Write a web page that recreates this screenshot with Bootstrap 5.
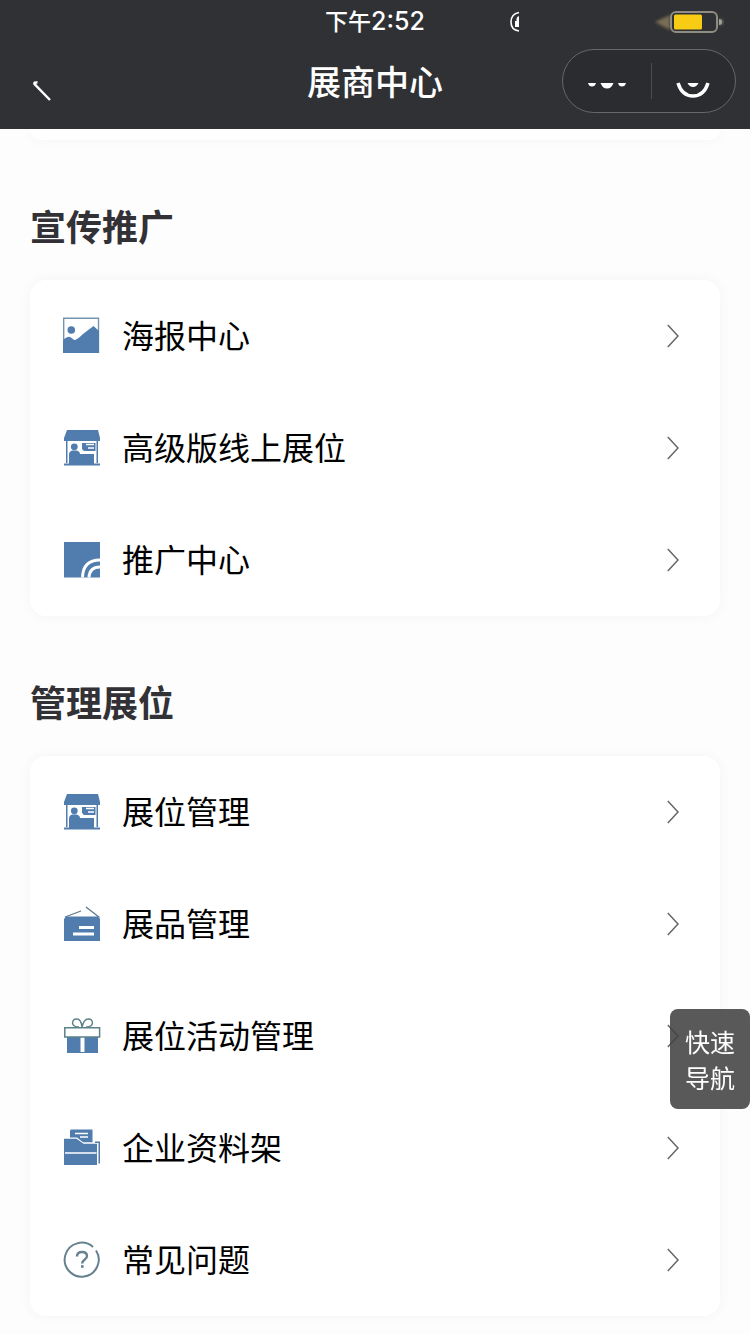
<!DOCTYPE html>
<html lang="zh-CN">
<head>
<meta charset="utf-8">
<meta name="viewport" content="width=device-width, initial-scale=1">
<title>展商中心</title>
<link rel="stylesheet" href="https://cdn.jsdelivr.net/npm/bootstrap@5.3.0/dist/css/bootstrap.min.css">
<style>
  body { background: #fefdfe; color: #000; font-family: "Liberation Sans", "Noto Sans CJK SC", sans-serif; }
  svg { display: block; flex: none; }
  .app-header { background: #303134; color: #fff; z-index: 10; padding-bottom: 10px; }
  .status-bar, .title-bar { display: grid; grid-template-columns: 1fr auto 1fr; align-items: center; }
  .status-bar { height: 43px; }
  .status-time { font: 500 25px/42px Inter, "Noto Sans CJK SC", sans-serif; }
  .status-time span { font-size: 23px; }
  .status-icons { padding-left: 84px; padding-right: 26px; }
  .title-bar { height: 76px; }
  .title-bar h1 { font: 500 34px/76px "Noto Sans CJK SC", sans-serif; }
  .back-btn { margin-left: 32px; justify-self: start; height: 44px; }
  .back-btn svg { margin-top: 20px; }
  .capsule { width: 174px; height: 64px; margin-right: 14px; border: 1px solid #66676a; background: #2b2c2f; }
  .capsule-split { width: 1px; height: 36px; background: #4c4d50; }
  .panel { margin: 0 30px; background: #fff; border-radius: 16px; box-shadow: 0 0 12px rgba(70, 50, 80, .05); }
  .panel-end { height: 11px; border-radius: 0 0 16px 16px; }
  .section-title { font: 700 36px/54px "Noto Sans CJK SC", sans-serif; color: #323136; padding: 58px 30px 28px; }
  .menu-row { height: 112px; padding: 0 41px 0 33px; gap: 21px; font-size: 32px; line-height: 48px; color: #000; text-decoration: none; }
  .menu-row span { padding-top: 2px; }
  .tint { color: #507cae; }
  .quick-nav { width: 80px; height: 100px; bottom: 225px; z-index: 5; border-radius: 8px; background: rgba(64, 64, 64, .87); font-size: 25px; line-height: 36px; color: #fff; font-family: "Noto Sans CJK SC", sans-serif; }
  .quick-nav:hover { background: #404040; color: #fff; }
</style>
</head>
<body>
<svg width="0" height="0" class="position-absolute" aria-hidden="true">
  <symbol id="chevron" viewBox="0 0 12 24"><path d="M.8 1 11 12 .8 23" fill="none" stroke="#666" stroke-width="1.5"/></symbol>
  <symbol id="booth" viewBox="0 0 38 38">
    <path fill="currentColor" d="M4 1h31l2 8v3H1V9zM3 11h1.500v23H3zM33.500 11H35v23h-1.500zM1 34.500h36v2H1zM6 35V25.500q0-3 3-4h4.500Q17 22.500 17 25h14v10z"/>
    <circle cx="11.300" cy="17.800" r="3.400" fill="currentColor"/>
    <path fill="currentColor" d="M19 14h13.500v8H21l-2-2z"/>
    <path stroke="#fff" stroke-width="1.500" d="M23 15.500h8M25 19h6"/>
  </symbol>
</svg>

<header class="app-header sticky-top">
  <div class="status-bar">
    <span></span>
    <div class="status-time"><span>下午</span>2:52</div>
    <div class="status-icons d-flex justify-content-between align-items-center">
      <svg width="11" height="22" viewBox="0 0 11 22" aria-hidden="true"><path d="M10 1.500Q2 3 2 11t8 9" fill="none" stroke="#fff" stroke-width="1.600"/><path d="M10 5q-3 1-2.500 5H6v6h4z" fill="#fff"/></svg>
      <svg width="74" height="24" viewBox="0 0 74 24" role="img" aria-label="电量">
        <defs><filter id="soft" x="-30%" y="-30%" width="160%" height="160%"><feGaussianBlur stdDeviation="1.500"/></filter></defs>
        <path d="M5 12 20 5v15z" fill="#9a8764" opacity=".7" filter="url(#soft)"/>
        <path d="M69 8q12 4 0 8z" fill="#77786c" opacity=".6" filter="url(#soft)"/>
        <rect x="21" y="2" width="46" height="20" rx="5" fill="#303134" stroke="#8f8c82" stroke-width="2"/>
        <rect x="24" y="4.500" width="28" height="15" rx="1.500" fill="#f8cb15"/>
        <path d="M69 9q3 0 3 3t-3 3z" fill="#a09f98"/>
      </svg>
    </div>
  </div>
  <div class="title-bar">
    <button type="button" class="btn p-0 border-0 back-btn" aria-label="返回">
      <svg width="20" height="22" viewBox="0 0 20 22"><path d="M5.500 2.500Q1.500 2 2.500 4L18 20" fill="none" stroke="#fff" stroke-width="2.500"/></svg>
    </button>
    <h1 class="m-0">展商中心</h1>
    <div class="capsule rounded-pill d-flex align-items-center ms-auto">
      <button type="button" class="btn p-0 border-0 flex-fill d-flex justify-content-center" aria-label="更多">
        <svg width="38" height="24" viewBox="0 0 38 24"><path fill="#fff" d="M0 14h8q-1 3.500-4 3.500T0 14zM12.500 14h13q-2 5.500-6.500 5.500T12.500 14zM30 14h8q-1 3.500-4 3.500T30 14z"/></svg>
      </button>
      <span class="capsule-split"></span>
      <button type="button" class="btn p-0 border-0 flex-fill d-flex justify-content-center" aria-label="关闭">
        <svg width="34" height="34" viewBox="0 0 34 34"><path d="M2 19q4 13 15 13t15-13" fill="none" stroke="#fff" stroke-width="3.500"/><path d="M11.500 19h11q-2 4-5.500 4t-5.500-4z" fill="#fff"/></svg>
      </button>
    </div>
  </div>
</header>

<main class="pb-3">
  <div class="panel panel-end"></div>

  <h2 class="section-title m-0">宣传推广</h2>
  <nav class="panel" aria-label="宣传推广">
    <a href="#" class="menu-row d-flex align-items-center">
      <svg class="tint" width="38" height="38" viewBox="0 0 38 38"><path d="M.7 1.200h34.800v34H.7z" fill="#fff" stroke="#7593ad" stroke-width="1.400"/><path fill="currentColor" d="M0 23q5-4 7-3t4 3q3 0 9-6L30.500 9l5.500 5v22H0z"/><circle cx="8.300" cy="13" r="3.800" fill="currentColor"/></svg>
      <span class="flex-fill">海报中心</span><svg width="12" height="24"><use href="#chevron"/></svg>
    </a>
    <a href="#" class="menu-row d-flex align-items-center">
      <svg class="tint" width="38" height="38"><use href="#booth"/></svg>
      <span class="flex-fill">高级版线上展位</span><svg width="12" height="24"><use href="#chevron"/></svg>
    </a>
    <a href="#" class="menu-row d-flex align-items-center">
      <svg class="tint" width="38" height="38" viewBox="0 0 38 38"><path fill="currentColor" d="M1 1h36v35.500H1z"/><path d="M19.500 36.500Q20 19 37 19M26 36.500Q26.500 26 37 26" fill="none" stroke="#fff" stroke-width="3"/></svg>
      <span class="flex-fill">推广中心</span><svg width="12" height="24"><use href="#chevron"/></svg>
    </a>
  </nav>

  <h2 class="section-title m-0">管理展位</h2>
  <nav class="panel" aria-label="管理展位">
    <a href="#" class="menu-row d-flex align-items-center">
      <svg class="tint" width="38" height="38"><use href="#booth"/></svg>
      <span class="flex-fill">展位管理</span><svg width="12" height="24"><use href="#chevron"/></svg>
    </a>
    <a href="#" class="menu-row d-flex align-items-center">
      <svg class="tint" width="38" height="38" viewBox="0 0 38 38"><path d="M2 12 18 6M23 2l13.500 10.500" stroke="#5e7a8f" stroke-width="1.300"/><path fill="currentColor" d="M3 11.500h32l2 2.500v22H1V14z"/><path fill="#fff" d="M16 21h15v3H16zM10 27.500h21v3H10z"/></svg>
      <span class="flex-fill">展品管理</span><svg width="12" height="24"><use href="#chevron"/></svg>
    </a>
    <a href="#" class="menu-row d-flex align-items-center">
      <svg class="tint" width="38" height="38" viewBox="0 0 38 38"><path fill="currentColor" d="M4 20h31v16H4z"/><path fill="#fff" d="M17.500 20h4v15h-4z"/><g fill="none" stroke="#5b8189" stroke-width="1.500"><path d="M1.800 10.800h34.800v9.200H1.800z"/><path d="M16 10q-6 0-6.500-4Q10 1.500 14 2q4 0 5 8 2-8 6-8 4-.5 4.500 4-.5 4-6.500 4"/></g></svg>
      <span class="flex-fill">展位活动管理</span><svg width="12" height="24"><use href="#chevron"/></svg>
    </a>
    <a href="#" class="menu-row d-flex align-items-center">
      <svg class="tint" width="38" height="38" viewBox="0 0 38 38"><path fill="currentColor" d="M7 1.500 8 .5h21.500v12.700H20L14 8.500H7zM1 9.700h12.500l7 5h13.500V36H1zM32 12.500h5v22h-1.500V14H32z"/><path d="M12 4.500h13M17 8h8M2 24h31.500" stroke="#fff" stroke-width="1.600"/></svg>
      <span class="flex-fill">企业资料架</span><svg width="12" height="24"><use href="#chevron"/></svg>
    </a>
    <a href="#" class="menu-row d-flex align-items-center">
      <svg width="38" height="38" viewBox="0 0 38 38" fill="none" stroke="#66818f" stroke-width="2"><path d="M30 6A17 17 0 1 0 33 9.500"/><path d="M14 15.500q0-4.500 5-4.500t5 4.200c0 3.300-4.800 3.300-4.800 7.300" stroke-width="2.400"/><path d="M18 25.500h2.600" stroke-width="2.600"/></svg>
      <span class="flex-fill">常见问题</span><svg width="12" height="24"><use href="#chevron"/></svg>
    </a>
  </nav>
</main>

<button type="button" class="quick-nav btn border-0 p-0 position-fixed end-0">快速<br>导航</button>

<script src="https://cdn.jsdelivr.net/npm/bootstrap@5.3.0/dist/js/bootstrap.bundle.min.js"></script>
</body>
</html>
